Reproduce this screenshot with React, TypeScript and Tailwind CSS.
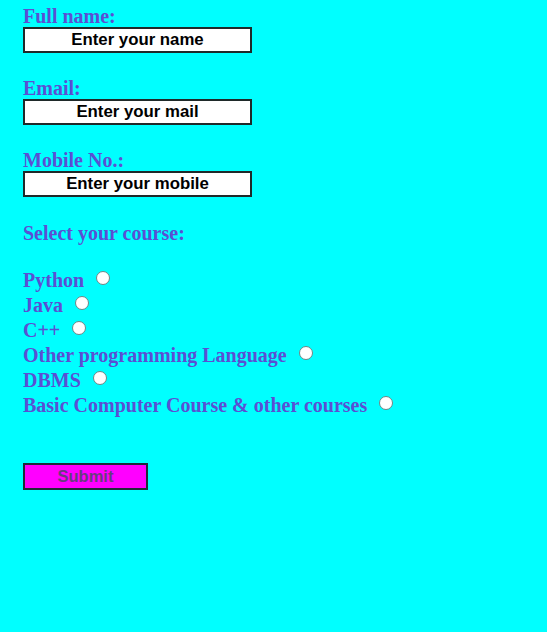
import React from "react";

const labelCls =
  "block text-[20px] leading-[22px] font-bold text-[#5b4fd3] [font-family:'Liberation_Serif',serif]";
const inputCls =
  "block w-[229px] h-[26px] bg-white border-2 border-[#1f2a2a] text-center text-[16.8px] font-bold text-black placeholder:text-black outline-none [font-family:'Liberation_Sans',Arial,sans-serif]";

const courses = [
  "Python",
  "Java",
  "C++",
  "Other programming Language",
  "DBMS",
  "Basic Computer Course & other courses",
];

export default function App() {
  return (
    <div className="min-h-[632px] w-full bg-[#00ffff] pl-[23px] pt-[5px]">
      <label className={labelCls}>Full name:</label>
      <input className={inputCls} placeholder="Enter your name" />

      <label className={labelCls + " mt-[24px]"}>Email:</label>
      <input className={inputCls} placeholder="Enter your mail" />

      <label className={labelCls + " mt-[24px]"}>Mobile No.:</label>
      <input className={inputCls} placeholder="Enter your mobile" />

      <div className={labelCls + " mt-[25px]"}>Select your course:</div>

      <div className="mt-[24px] flex flex-col">
        {courses.map((c) => (
          <label
            key={c}
            className="flex items-start h-[25px] text-[20px] leading-[25px] font-bold text-[#5b4fd3] [font-family:'Liberation_Serif',serif]"
          >
            <span>{c}</span>
            <span className="ml-[12px] mt-[3px] block w-[14px] h-[14px] rounded-full bg-white border border-[#6f8585]" />
          </label>
        ))}
      </div>

      <button className="mt-[45px] block w-[125px] h-[27px] bg-[#ff00ff] border-2 border-[#1f2a3a] text-[16.5px] font-bold text-[#673d7d] leading-none [font-family:'Liberation_Sans',Arial,sans-serif]">
        Submit
      </button>
    </div>
  );
}
